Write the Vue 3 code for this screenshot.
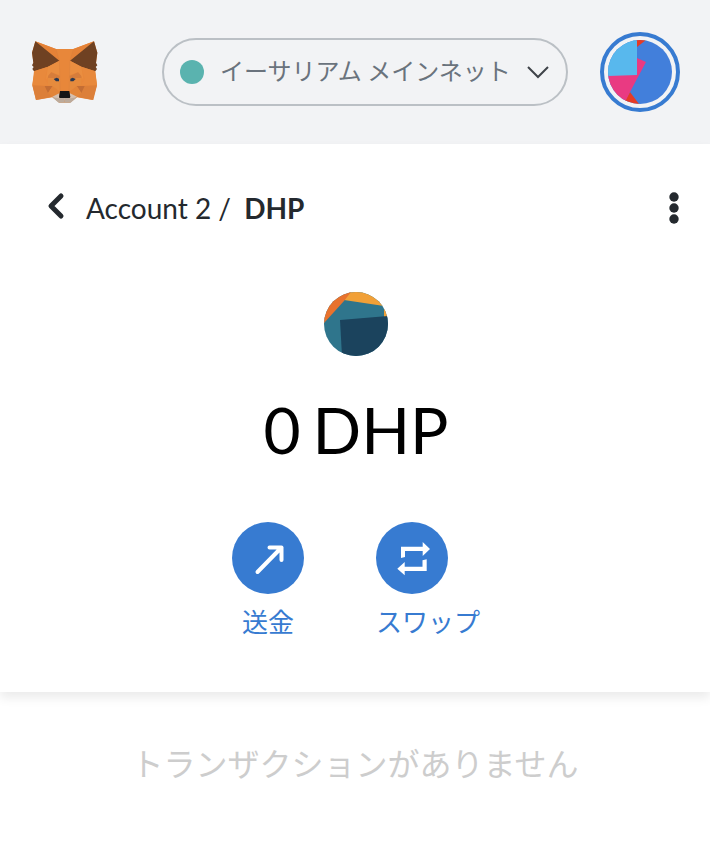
<template>
  <div class="wallet">
    <header class="app-header">
      <a class="app-header__logo" href="#" aria-label="MetaMask">
        <svg width="66" height="62" viewBox="36 33 198 186">
          <polygon fill="#e8873a" points="46,34 108,57 160,57 222,34 232,68 225,123 231,165 218,210 171,202 150,218 118,218 97,202 48,210 37,165 44,123 36,68"/>
          <g v-for="side in sides" :key="side" :transform="side">
            <polygon fill="#e58237" points="46,34 108,57 118,91"/>
            <polygon fill="#6f4122" points="46,34 118,92 84,110 42,124 37,117 41,111 36,106 40,98 36,68"/>
            <polygon fill="#e8893c" points="42,124 84,110 74,148 86,166 37,166"/>
            <polygon fill="#ea8e40" points="84,110 118,92 119,136 93,126 78,149"/>
            <polygon fill="#d67d3b" points="84,138 94,127 119,138 119,144 84,144"/>
            <polygon fill="#dc7f39" points="37,166 76,168 98,200 48,210"/>
            <polygon fill="#c36d34" points="74,168 98,168 84,189"/>
            <polygon fill="#e28438" points="98,168 117,184 113,200 98,202 84,189"/>
            <polygon fill="#e68b3d" points="84,144 119,144 119,184 98,168 84,166"/>
            <polygon fill="#2b3850" points="101,147 110,143 117,146 117,154 108,154"/>
            <polygon fill="#d5c0b0" points="97,200 118,190 118,204 134,204 134,211 114,210"/>
            <polygon fill="#bcaa9b" points="97,202 116,205 134,204 134,218 116,218"/>
            <polyline fill="none" stroke="#d5803f" stroke-width="1" points="108,57 118,92 121,182"/>
          </g>
          <polygon fill="#161616" points="120,183 148,183 151,201 149,204 119,204 117,201"/>
        </svg>
      </a>
      <button class="network" type="button">
        <span class="network__dot"></span>
        <span class="network__name">イーサリアム メインネット</span>
        <svg class="network__chevron" width="24" height="16" viewBox="0 0 24 16">
          <path d="M2 3L12 13L22 3" fill="none" stroke="#3f4349" stroke-width="2"/>
        </svg>
      </button>
      <button class="account" type="button" aria-label="Account 2">
        <svg width="64" height="64" viewBox="0 0 64 64">
          <defs>
            <clipPath id="account-clip"><circle cx="32" cy="32" r="32"/></clipPath>
          </defs>
          <g clip-path="url(#account-clip)">
            <rect width="64" height="64" fill="#427fdb"/>
            <polygon fill="#e53b26" points="28,0 38,0 29,7"/>
            <polygon fill="#e53b26" points="22,52 31,64 15,64"/>
            <polygon fill="#e93a82" points="0,35 29,18 38,22 22,52 16,64 0,64"/>
            <polygon fill="#58b8ed" points="0,0 29,0 29,35 0,36"/>
          </g>
        </svg>
      </button>
    </header>

    <main class="asset">
      <nav class="asset__nav">
        <button class="asset__back" type="button">
          <svg width="20" height="32" viewBox="0 0 20 32">
            <path d="M15 4L5 14L15 24" fill="none" stroke="#24292e" stroke-width="5" stroke-linecap="round" stroke-linejoin="round"/>
          </svg>
          <span>Account 2 / <b>DHP</b></span>
        </button>
        <button class="asset__menu" type="button" aria-label="Menu">
          <svg width="12" height="32" viewBox="0 0 12 32">
            <circle cx="6" cy="5" r="4.7" fill="#24292e"/>
            <circle cx="6" cy="16" r="4.7" fill="#24292e"/>
            <circle cx="6" cy="27" r="4.7" fill="#24292e"/>
          </svg>
        </button>
      </nav>

      <svg class="asset__icon" width="64" height="64" viewBox="0 0 64 64">
        <defs>
          <clipPath id="token-clip"><circle cx="32" cy="32" r="32"/></clipPath>
        </defs>
        <g clip-path="url(#token-clip)">
          <rect width="64" height="64" fill="#2f758c"/>
          <polygon fill="#f1a037" points="26,0 64,0 64,25 60,25 60,14 20,8"/>
          <polygon fill="#e8722d" points="0,0 27,0 20,9 0,31"/>
          <polygon fill="#1b435d" points="16,28 64,24 64,64 18,64"/>
        </g>
      </svg>

      <h1 class="asset__balance">
        <span>0</span>
        <span>DHP</span>
      </h1>

      <div class="actions">
        <button class="action" type="button">
          <span class="action__circle">
            <svg width="40" height="40" viewBox="0 0 40 40">
              <path d="M9.5 34L33.5 9.5M21.5 9.5H33.5V22" fill="none" stroke="#fff" stroke-width="4" stroke-linecap="round" stroke-linejoin="round"/>
            </svg>
          </span>
          <span class="action__label">送金</span>
        </button>
        <button class="action" type="button">
          <span class="action__circle">
            <svg width="40" height="40" viewBox="0 0 40 40">
              <path d="M9 20V8.7H30.7V4L38 11L30.7 18V13H13V19Z" fill="#fff"/>
              <path d="M34.7 21.3V33H12.7V37.3L5.3 30.7L12.7 24V28.7H30.5V22.3Z" fill="#fff"/>
            </svg>
          </span>
          <span class="action__label">スワップ</span>
        </button>
      </div>
    </main>

    <section class="activity">
      <p>トランザクションがありません</p>
    </section>
  </div>
</template>

<script setup>
// the fox face is symmetric, each half is drawn from the same shapes
const sides = ['', 'translate(268 0) scale(-1 1)'];
</script>

<style>
body {
  background: #fff;
}
</style>

<style scoped>
.wallet {
  font-family: Lato, "Noto Sans CJK JP", sans-serif;
  color: #24292e;
}

button {
  padding: 0;
  border: none;
  background: none;
  font: inherit;
  color: inherit;
  cursor: pointer;
}

svg {
  display: block;
}

.app-header {
  display: flex;
  align-items: center;
  justify-content: space-between;
  gap: 32px;
  padding: 32px 30px 32px 32px;
  background: #f2f3f5;
}

.app-header__logo {
  flex: 0 0 66px;
  margin-right: 32px;
}

.network {
  display: flex;
  flex: 1;
  align-items: center;
  gap: 16px;
  min-width: 0;
  height: 68px;
  padding: 0 16px;
  border: 2px solid #bbc0c5;
  border-radius: 34px;
}

.network__dot {
  flex: 0 0 24px;
  height: 24px;
  border-radius: 50%;
  background: #5ab3af;
}

.network__name {
  flex: 1;
  min-width: 0;
  padding-bottom: 4px;
  font-family: "Noto Sans CJK JP", sans-serif;
  font-size: 24px;
  line-height: 32px;
  white-space: nowrap;
  text-align: left;
  color: #6a737d;
}

.network__chevron {
  flex: 0 0 24px;
}

.account {
  flex: 0 0 80px;
  padding: 4px;
  border: 4px solid #377bd1;
  border-radius: 50%;
}

.asset {
  padding: 40px 30px 50px 32px;
  box-shadow: 0 6px 10px rgba(0, 0, 0, 0.08);
}

.asset__nav {
  display: flex;
  align-items: center;
  justify-content: space-between;
  height: 48px;
  padding-left: 14px;
}

.asset__back {
  display: flex;
  align-items: center;
  gap: 20px;
  font-size: 28px;
  line-height: 40px;
}

.asset__back b {
  margin-left: 6px;
}

.asset__icon {
  margin: 60px auto 38px;
}

.asset__balance {
  display: flex;
  justify-content: center;
  gap: 12px;
  margin: 0;
  font-size: 64px;
  line-height: 72px;
  font-weight: 400;
  color: #000;
}

.actions {
  display: flex;
  justify-content: center;
  gap: 72px;
  margin-top: 56px;
}

.action {
  display: flex;
  flex-direction: column;
  align-items: flex-start;
  gap: 8px;
  color: #377bd1;
}

.action__circle {
  display: flex;
  align-items: center;
  justify-content: center;
  width: 72px;
  height: 72px;
  border-radius: 50%;
  background: #377bd1;
}

.action__label {
  min-width: 72px;
  font-size: 26px;
  line-height: 40px;
  text-align: center;
}

.activity {
  padding: 48px 32px;
  font-size: 32px;
  line-height: 48px;
  text-align: center;
  color: #cdcdcd;
}

.activity p {
  margin: 0;
}
</style>
